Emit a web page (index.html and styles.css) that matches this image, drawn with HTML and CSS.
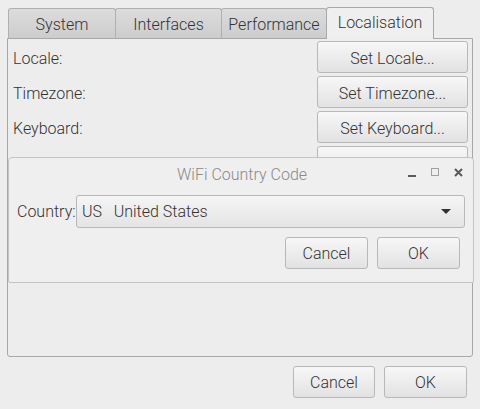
FILE: index.html
```html
<!DOCTYPE html>
<html>
<head>
<meta charset="utf-8">
<link rel="stylesheet" href="styles.css">
</head>
<body>
<div class="window">
  <div class="notebook">
    <div class="tabs">
      <div class="tab t-system">System</div>
      <div class="tab t-interfaces">Interfaces</div>
      <div class="tab t-performance">Performance</div>
      <div class="tab t-local active">Localisation</div>
    </div>
    <div class="page">
      <div class="row"><span class="label">Locale:</span><button class="btn set">Set Locale...</button></div>
      <div class="row"><span class="label">Timezone:</span><button class="btn set">Set Timezone...</button></div>
      <div class="row"><span class="label">Keyboard:</span><button class="btn set">Set Keyboard...</button></div>
      <div class="row"><span class="label">WiFi Country:</span><button class="btn set">Set WiFi Country...</button></div>
    </div>
  </div>
  <div class="actions">
    <button class="btn act">Cancel</button>
    <button class="btn act ok">OK</button>
  </div>

  <div class="dialog">
    <div class="titlebar">
      <span class="title">WiFi Country Code</span>
      <div class="controls">
        <span class="ctl min"></span>
        <span class="ctl max"></span>
        <svg class="ctl close" width="9" height="9" viewBox="0 0 9 9"><path d="M1 1 L8 8 M8 1 L1 8" stroke="#5a5a5a" stroke-width="2"/></svg>
      </div>
    </div>
    <div class="dbody">
      <div class="field">
        <span class="clabel">Country:</span>
        <div class="combo"><span class="cval">US&nbsp;&nbsp;&nbsp;United States</span><span class="arrow"></span></div>
      </div>
      <div class="dactions">
        <button class="btn dact">Cancel</button>
        <button class="btn dact">OK</button>
      </div>
    </div>
  </div>
</div>
</body>
</html>
```
FILE: styles.css
```css
html, body {
  margin: 0;
  padding: 0;
  background: #ededed;
  width: 480px;
  height: 409px;
  overflow: hidden;
}
body {
  font-family: Roboto, "Liberation Sans", sans-serif;
  font-size: 16px;
  font-weight: 300;
  color: #333333;
}
.window {
  position: relative;
  width: 480px;
  height: 409px;
  padding: 7px 0 0 7px;
  box-sizing: border-box;
}
.notebook {
  width: 466px;
}
.tabs {
  display: flex;
  align-items: flex-end;
  height: 31px;
}
.tab {
  box-sizing: border-box;
  height: 30px;
  border: 1px solid #b0b0b0;
  border-bottom: none;
  border-radius: 3px 3px 0 0;
  background: linear-gradient(#dcdcdc, #cdcdcd);
  display: flex;
  align-items: center;
  justify-content: center;
  margin-right: -1px;
  padding-top: 1px;
}
.t-system { width: 108px; margin-left: 1px; }
.t-interfaces { width: 107px; }
.t-performance { width: 106px; }
.t-local { width: 108px; }
.tab.active {
  height: 32px;
  background: #efefef;
  margin-bottom: -1px;
  position: relative;
  z-index: 1;
  border-color: #a8a8a8;
  padding-top: 0;
  padding-bottom: 3px;
}
.page {
  box-sizing: border-box;
  height: 319px;
  border: 1px solid #a8a8a8;
  border-radius: 0 0 3px 3px;
  background: #ededed;
  padding: 2px 4px 0 4px;
  display: flex;
  flex-direction: column;
  gap: 3px;
}
.row {
  display: flex;
  align-items: center;
  justify-content: space-between;
  height: 32px;
}
.label { padding-left: 1px; padding-top: 2px; }
.btn {
  font-family: Roboto, "Liberation Sans", sans-serif;
  font-size: 16px;
  font-weight: 300;
  color: #333333;
  box-sizing: border-box;
  border: 1px solid #b8b8b8;
  border-radius: 3px;
  background: linear-gradient(#f7f7f7, #e2e2e2);
  padding: 1px 0 0 0;
  height: 32px;
}
.set { width: 151px; padding-top: 3px; }
.actions {
  display: flex;
  justify-content: flex-end;
  gap: 9px;
  margin-top: 9px;
  width: 460px;
}
.act { width: 82px; }
.ok { width: 83px; }

.dialog {
  position: absolute;
  left: 8px;
  top: 157px;
  width: 466px;
  height: 126px;
  box-sizing: border-box;
  border: 1px solid #c4c4c4;
  border-radius: 4px 4px 2px 2px;
  background: #efefef;
  display: flex;
  flex-direction: column;
}
.titlebar {
  height: 31px;
  position: relative;
  display: flex;
  align-items: center;
  justify-content: center;
}
.title {
  color: #8a8a8a;
  margin-left: 2px;
  margin-top: 2px;
}
.controls {
  position: absolute;
  right: 10px;
  top: 10px;
  display: flex;
  align-items: flex-end;
  gap: 15px;
}
.ctl { display: block; }
.min {
  width: 8px;
  height: 2px;
  background: #5a5a5a;
  margin-bottom: 0;
}
.max {
  width: 6px;
  height: 6px;
  border: 1px solid #a0a0a0;
  margin-bottom: 1px;
}
.dbody {
  padding: 6px 8px 0 8px;
}
.field {
  display: flex;
  align-items: center;
  height: 33px;
}
.clabel { width: 59px; }
.combo {
  box-sizing: border-box;
  width: 389px;
  height: 33px;
  border: 1px solid #b8b8b8;
  border-radius: 3px;
  background: linear-gradient(#f5f5f5, #e4e4e4);
  display: flex;
  align-items: center;
  justify-content: space-between;
  padding: 0 13px 0 5px;
}
.arrow {
  width: 0;
  height: 0;
  border-left: 5px solid transparent;
  border-right: 5px solid transparent;
  border-top: 5px solid #333;
}
.dactions {
  display: flex;
  justify-content: flex-end;
  gap: 9px;
  margin-top: 9px;
  padding-right: 5px;
}
.dact { width: 83px; }
```
